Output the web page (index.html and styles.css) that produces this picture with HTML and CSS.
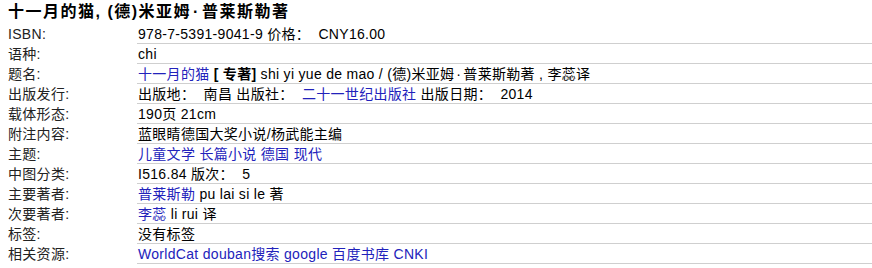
FILE: index.html
```html
<!DOCTYPE html>
<html lang="zh">
<head>
<meta charset="utf-8">
<title>十一月的猫</title>
<link rel="stylesheet" href="styles.css">
</head>
<body>
<div class="page">
  <h1 class="title">十一月的猫, (德)米亚姆<span class="dot">·</span>普莱斯勒著</h1>
  <div class="info">
    <div class="label">ISBN:</div>
    <div class="value">978-7-5391-9041-9 价格：&nbsp; CNY16.00</div>
    <div class="label">语种:</div>
    <div class="value">chi</div>
    <div class="label">题名:</div>
    <div class="value"><a href="#">十一月的猫</a> <b>[ 专著]</b> shi yi yue de mao / (德)米亚姆<span class="dot">·</span>普莱斯勒著 , 李蕊译</div>
    <div class="label">出版发行:</div>
    <div class="value">出版地：&nbsp; 南昌 出版社：&nbsp; <a href="#">二十一世纪出版社</a> 出版日期：&nbsp; 2014</div>
    <div class="label">载体形态:</div>
    <div class="value">190页 21cm</div>
    <div class="label">附注内容:</div>
    <div class="value">蓝眼睛德国大奖小说/杨武能主编</div>
    <div class="label">主题:</div>
    <div class="value"><a href="#">儿童文学</a> <a href="#">长篇小说</a> <a href="#">德国</a> <a href="#">现代</a></div>
    <div class="label">中图分类:</div>
    <div class="value">I516.84 版次：&nbsp; 5</div>
    <div class="label">主要著者:</div>
    <div class="value"><a href="#">普莱斯勒</a> pu lai si le 著</div>
    <div class="label">次要著者:</div>
    <div class="value"><a href="#">李蕊</a> li rui 译</div>
    <div class="label">标签:</div>
    <div class="value">没有标签</div>
    <div class="label">相关资源:</div>
    <div class="value"><a href="#">WorldCat</a> <a href="#">douban搜索</a> <a href="#">google</a> <a href="#">百度书库</a> <a href="#">CNKI</a></div>
  </div>
</div>
</body>
</html>
```

FILE: styles.css
```css
html, body {
  margin: 0;
  padding: 0;
  background: #fff;
}
body {
  font-family: "Liberation Sans", Arial, "Noto Sans CJK SC", sans-serif;
  font-size: 14px;
  letter-spacing: 0.3px;
  color: #000;
}
.page {
  padding-left: 8px;
}
.title {
  margin: 0;
  font-size: 16px;
  font-weight: bold;
  line-height: 24px;
  height: 24px;
  letter-spacing: 1.5px;
  color: #000;
}
.dot {
  padding: 0 2px;
}
.info {
  display: grid;
  grid-template-columns: 129px 1fr;
}
.label {
  height: 20px;
  line-height: 20px;
  color: #222;
  white-space: nowrap;
}
.value {
  height: 19px;
  line-height: 20px;
  padding-left: 1px;
  border-bottom: 1px solid #cfcfcf;
  white-space: nowrap;
}
.value a {
  color: #2222bb;
  text-decoration: none;
}
.value b {
  font-weight: bold;
}
```
